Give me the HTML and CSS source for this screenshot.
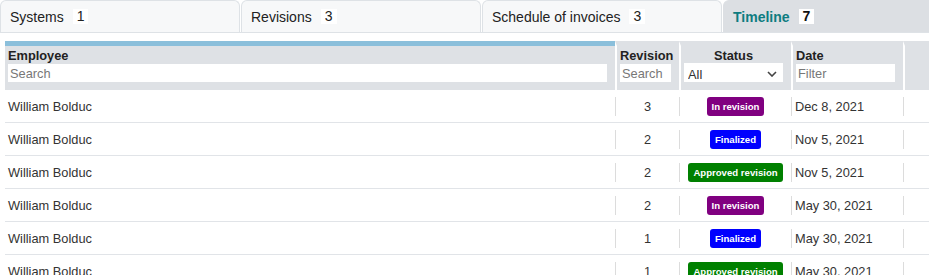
FILE: index.html
```html
<!DOCTYPE html>
<html lang="en">
  <head>
    <meta charset="UTF-8">
    <meta name="viewport" content="width=device-width, initial-scale=1.0">
    <title>Timeline</title>
    <link rel="stylesheet" href="styles.css">
  </head>
  <body>
    <div class="tabs">
      <a href="#" class="tab">Systems <span class="count">1</span></a>
      <a href="#" class="tab">Revisions <span class="count">3</span></a>
      <a href="#" class="tab">Schedule of invoices <span class="count">3</span></a>
      <a href="#" class="tab active">Timeline <span class="count">7</span></a>
    </div>
    <table class="timeline">
      <colgroup>
        <col class="col-employee">
        <col class="col-revision">
        <col class="col-status">
        <col class="col-date">
        <col>
      </colgroup>
      <thead>
        <tr>
          <th class="sorted">
            <div class="label">Employee</div>
            <input type="text" placeholder="Search" />
          </th>
          <th>
            <div class="label">Revision</div>
            <input type="text" placeholder="Search" />
          </th>
          <th class="center">
            <div class="label">Status</div>
            <div class="select-wrap">
              <select>
                <option>All</option>
                <option>In revision</option>
                <option>Finalized</option>
                <option>Approved revision</option>
              </select>
              <svg class="chevron" width="10" height="6" viewBox="0 0 10 6"><path d="M1 1l4 4 4-4" fill="none" stroke="#444" stroke-width="1.6"/></svg>
            </div>
          </th>
          <th>
            <div class="label">Date</div>
            <input type="text" placeholder="Filter" />
          </th>
          <th></th>
        </tr>
      </thead>
      <tbody>
        <tr>
          <td><div class="cell">William Bolduc</div></td>
          <td><div class="cell num">3</div></td>
          <td><div class="cell center"><span class="badge revision">In revision</span></div></td>
          <td><div class="cell">Dec 8, 2021</div></td>
          <td><div class="cell"></div></td>
        </tr>
        <tr>
          <td><div class="cell">William Bolduc</div></td>
          <td><div class="cell num">2</div></td>
          <td><div class="cell center"><span class="badge finalized">Finalized</span></div></td>
          <td><div class="cell">Nov 5, 2021</div></td>
          <td><div class="cell"></div></td>
        </tr>
        <tr>
          <td><div class="cell">William Bolduc</div></td>
          <td><div class="cell num">2</div></td>
          <td><div class="cell center"><span class="badge approved">Approved revision</span></div></td>
          <td><div class="cell">Nov 5, 2021</div></td>
          <td><div class="cell"></div></td>
        </tr>
        <tr>
          <td><div class="cell">William Bolduc</div></td>
          <td><div class="cell num">2</div></td>
          <td><div class="cell center"><span class="badge revision">In revision</span></div></td>
          <td><div class="cell">May 30, 2021</div></td>
          <td><div class="cell"></div></td>
        </tr>
        <tr>
          <td><div class="cell">William Bolduc</div></td>
          <td><div class="cell num">1</div></td>
          <td><div class="cell center"><span class="badge finalized">Finalized</span></div></td>
          <td><div class="cell">May 30, 2021</div></td>
          <td><div class="cell"></div></td>
        </tr>
        <tr>
          <td><div class="cell">William Bolduc</div></td>
          <td><div class="cell num">1</div></td>
          <td><div class="cell center"><span class="badge approved">Approved revision</span></div></td>
          <td><div class="cell">May 30, 2021</div></td>
          <td><div class="cell"></div></td>
        </tr>
      </tbody>
    </table>
  </body>
</html>
```

FILE: styles.css
```css
:root {
  --text: #222;
  --body-text: #333;
  --tab-bg: #f7f8f9;
  --tab-active: #dcdfe3;
  --tab-border: #dee2e6;
  --accent: #0e7c80;
  --head-bg: #dee1e5;
  --sort-bar: #8bbfdb;
  --line: #e1e4e8;
  --divider: #dcdcdc;
}

html, body {
  margin: 0;
  overflow: hidden;
}

body {
  font-family: "Liberation Sans", Arial, sans-serif;
  color: var(--text);
  background: #fff;
}

/* tabs */
.tabs {
  display: flex;
  gap: 1px;
  height: 33px;
  box-sizing: border-box;
  border-bottom: 1px solid var(--tab-border);
  overflow: hidden;
}

.tab {
  flex: 0 0 240px;
  box-sizing: border-box;
  display: flex;
  align-items: center;
  padding: 0 9px;
  background: var(--tab-bg);
  border: 1px solid var(--tab-border);
  border-bottom: none;
  border-radius: 6px 6px 0 0;
  font-size: 14px;
  color: var(--text);
  text-decoration: none;
}

.tab .count {
  margin-left: 9px;
  padding: 0 4px;
  line-height: 15px;
  background: #fff;
}

.tab.active {
  background: var(--tab-active);
  border-color: var(--tab-active);
  color: var(--accent);
  font-weight: bold;
}

.tab.active .count {
  color: #111;
}

/* table */
.timeline {
  margin: 8px 0 0 5px;
  width: calc(100% - 5px);
  table-layout: fixed;
  border-collapse: separate;
  border-spacing: 0;
  font-size: 12.8px;
}

.col-employee { width: 610px; }
.col-revision { width: 64px; }
.col-status { width: 112px; }
.col-date { width: 112px; }

.timeline th {
  background: var(--head-bg);
  border-top: 5px solid var(--head-bg);
  padding: 2px 8px 8px 3px;
  text-align: left;
  vertical-align: top;
}

.timeline th + th {
  border-left: 2px solid #fff;
  padding-left: 3px;
}

.timeline th.sorted {
  border-top-color: var(--sort-bar);
}

.timeline th.center {
  text-align: center;
}

.label {
  font-weight: bold;
  line-height: 15px;
  color: var(--text);
}

.timeline th input {
  display: block;
  width: 100%;
  height: 18px;
  margin-top: 1px;
  box-sizing: border-box;
  border: none;
  padding: 0 2px;
  font-family: inherit;
  font-weight: normal;
  font-size: 12.8px;
  background: #fff;
  color: var(--text);
}

.timeline th input::placeholder {
  color: #777;
}

.select-wrap {
  position: relative;
}

.select-wrap select {
  display: block;
  width: 100%;
  height: 19px;
  appearance: none;
  border: none;
  background: #fff;
  font-family: inherit;
  font-weight: normal;
  font-size: 12.8px;
  padding: 3px 4px 0;
  color: #333;
}

.chevron {
  position: absolute;
  right: 6px;
  top: 8px;
}

.timeline td {
  padding: 0;
  height: 32px;
  border-bottom: 1px solid var(--line);
  color: var(--body-text);
}

.cell {
  display: flex;
  align-items: center;
  height: 19px;
  padding-left: 3px;
  white-space: nowrap;
}

td + td .cell {
  border-left: 1px solid var(--divider);
}

.cell.num,
.cell.center {
  justify-content: center;
  padding-left: 0;
}

.badge {
  display: inline-block;
  padding: 0 5px;
  line-height: 19px;
  border-radius: 3px;
  font-size: 9.6px;
  font-weight: bold;
  color: #fff;
}

.badge.revision { background: #800080; }
.badge.finalized { background: #0000ff; }
.badge.approved { background: #008000; }
```
